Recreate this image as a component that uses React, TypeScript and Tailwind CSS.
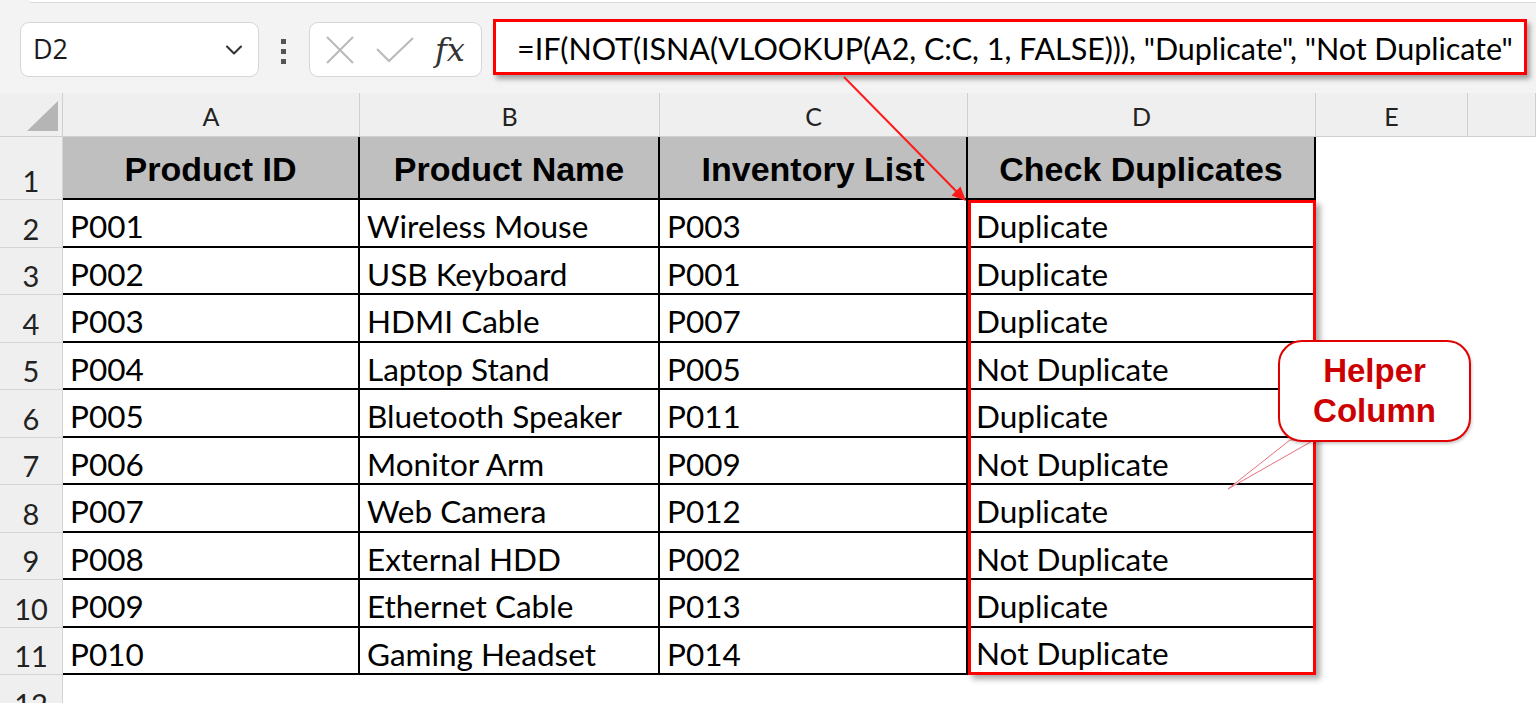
import React from 'react';
import { ChevronDown } from 'lucide-react';

const rows = [
  ['P001', 'Wireless Mouse', 'P003', 'Duplicate'],
  ['P002', 'USB Keyboard', 'P001', 'Duplicate'],
  ['P003', 'HDMI Cable', 'P007', 'Duplicate'],
  ['P004', 'Laptop Stand', 'P005', 'Not Duplicate'],
  ['P005', 'Bluetooth Speaker', 'P011', 'Duplicate'],
  ['P006', 'Monitor Arm', 'P009', 'Not Duplicate'],
  ['P007', 'Web Camera', 'P012', 'Duplicate'],
  ['P008', 'External HDD', 'P002', 'Not Duplicate'],
  ['P009', 'Ethernet Cable', 'P013', 'Duplicate'],
  ['P010', 'Gaming Headset', 'P014', 'Not Duplicate'],
];

const headers = ['Product ID', 'Product Name', 'Inventory List', 'Check Duplicates'];

const calibri = { fontFamily: 'Lato, "Open Sans", sans-serif' };

const RowNum = ({ n }: { n: number }) => (
  <div className="flex items-end justify-center bg-[#efefef] border-r border-b border-[#d4d4d4] pb-[4px] text-[29px] leading-none text-[#222]">
    {n}
  </div>
);

const DataCell = ({ text }: { text: string }) => (
  <div className="flex items-end border-r-2 border-b-2 border-black bg-white pl-[7px] pb-[3px] text-[31.5px] leading-none text-black whitespace-nowrap overflow-hidden">
    {text}
  </div>
);

const Blank = () => <div className="bg-white" />;

const App: React.FC = () => {
  return (
    <div className="relative w-[1536px] h-[703px] overflow-hidden bg-white" style={calibri}>
      {/* formula bar */}
      <div className="h-[93px] bg-[#f3f3f3]">
        <div className="h-[5px] pl-[30px]">
          <div className="h-[3px] bg-white border-b border-[#d8d8d8]" />
        </div>
        <div className="flex items-start">
          <div className="ml-[20px] mt-[17px] w-[239px] h-[55px] rounded-[9px] border border-[#d6d6d6] bg-white flex items-center justify-between pl-[12px] pr-[10px]">
            <span className="text-[27px] text-[#1a1a1a]" style={{ fontFamily: '"Open Sans", sans-serif' }}>D2</span>
            <ChevronDown size={28} strokeWidth={1.8} className="text-[#333]" />
          </div>
          <div className="ml-[22px] mt-[34px] flex flex-col gap-[5px]">
            <div className="w-[5px] h-[5px] bg-[#555]" />
            <div className="w-[5px] h-[5px] bg-[#555]" />
            <div className="w-[5px] h-[5px] bg-[#555]" />
          </div>
          <div className="ml-[23px] mt-[17px] w-[173px] h-[55px] rounded-[9px] border border-[#d6d6d6] bg-white flex items-center pl-[15px] gap-[20px]">
            <svg width="30" height="30" viewBox="0 0 30 30">
              <path d="M2 2 L28 28 M28 2 L2 28" stroke="#b9b9b9" strokeWidth="2" fill="none" />
            </svg>
            <svg width="40" height="28" viewBox="0 0 40 28">
              <path d="M2 13 L14 25 L38 2" stroke="#b9b9b9" strokeWidth="2" fill="none" />
            </svg>
            <span className="italic text-[32px] leading-none text-[#333]" style={{ fontFamily: '"DejaVu Serif", "Liberation Serif", serif' }}>fx</span>
          </div>
          <div className="ml-[11px] mt-[14px] w-[1034px] h-[56px] border-[3px] border-[#ff0000] bg-white shadow-[3px_4px_5px_rgba(0,0,0,0.35)] flex items-center pl-[21px] pt-[4px] overflow-hidden whitespace-nowrap">
            <span className="text-[30.5px] tracking-[-0.05px] text-black">=IF(NOT(ISNA(VLOOKUP(A2, C:C, 1, FALSE))), "Duplicate", "Not Duplicate"</span>
          </div>
        </div>
      </div>

      {/* sheet */}
      <div className="grid grid-cols-[63px_297px_300px_308px_348px_152px_1fr] grid-rows-[44px_63px_repeat(10,47.5px)_47.5px]">
        {/* column letters */}
        <div className="relative bg-[#efefef] border-r border-b border-[#cfcfcf]">
          <svg className="absolute left-[27px] top-[8px]" width="31" height="30" viewBox="0 0 31 30">
            <polygon points="0,30 31,0 31,30" fill="#b5b5b5" />
          </svg>
        </div>
        {['A', 'B', 'C', 'D', 'E', ''].map((l, i) => (
          <div key={i} className="flex items-end justify-center bg-[#efefef] border-r border-b border-[#cfcfcf] pb-[7px] text-[25px] leading-none text-[#222]">
            {l}
          </div>
        ))}

        {/* row 1 */}
        <RowNum n={1} />
        {headers.map(h => (
          <div key={h} className="flex items-center justify-center bg-[#bfbfbf] border-r-2 border-b-2 border-black pt-[4px] text-[34px] font-bold text-black whitespace-nowrap" style={{ fontFamily: '"Liberation Sans", Arial, sans-serif' }}>
            {h}
          </div>
        ))}
        <Blank />
        <Blank />

        {/* helper column */}
        <div className="col-start-5 row-start-3 row-span-10 flex flex-col border-[3px] border-[#ff0000] bg-white shadow-[4px_4px_6px_rgba(0,0,0,0.35)] z-10">
          {rows.map((r, i) => (
            <div
              key={i}
              className={`flex items-end pl-[5px] pb-[3px] text-[31.5px] leading-none text-black whitespace-nowrap ${i === 9 ? 'h-[44.5px]' : 'border-b-2 border-black'} ${i === 0 ? 'h-[44.5px]' : i === 9 ? '' : 'h-[47.5px]'}`}
            >
              {r[3]}
            </div>
          ))}
        </div>

        {rows.map((r, i) => (
          <React.Fragment key={i}>
            <RowNum n={i + 2} />
            <DataCell text={r[0]} />
            <DataCell text={r[1]} />
            <DataCell text={r[2]} />
            <Blank />
            <Blank />
          </React.Fragment>
        ))}

        {/* row 12 */}
        <RowNum n={12} />
        <Blank />
      </div>

      {/* annotation arrow and callout tail */}
      <svg className="absolute left-0 top-0 pointer-events-none z-20" width="1536" height="703" viewBox="0 0 1536 703">
        <line x1="844" y1="77" x2="958" y2="193" stroke="#ff1a1a" strokeWidth="2" />
        <polygon points="951.5,195.5 960.5,186.5 966,201" fill="#ff1a1a" />
        <polygon points="1290,440 1314,440 1228,489" fill="#fff" stroke="#e8707e" strokeWidth="1" />
      </svg>

      {/* callout */}
      <div className="absolute left-[1278px] top-[340px] z-30 w-[193px] h-[102px] rounded-[24px] border-2 border-[#e00000] bg-white shadow-[1px_2px_3px_rgba(0,0,0,0.2)] flex flex-col items-center justify-center leading-[40px] text-[33px] font-bold text-[#cc0000]" style={{ fontFamily: '"Liberation Sans", Arial, sans-serif' }}>
        <span>Helper</span>
        <span>Column</span>
      </div>
    </div>
  );
};

export default App;
